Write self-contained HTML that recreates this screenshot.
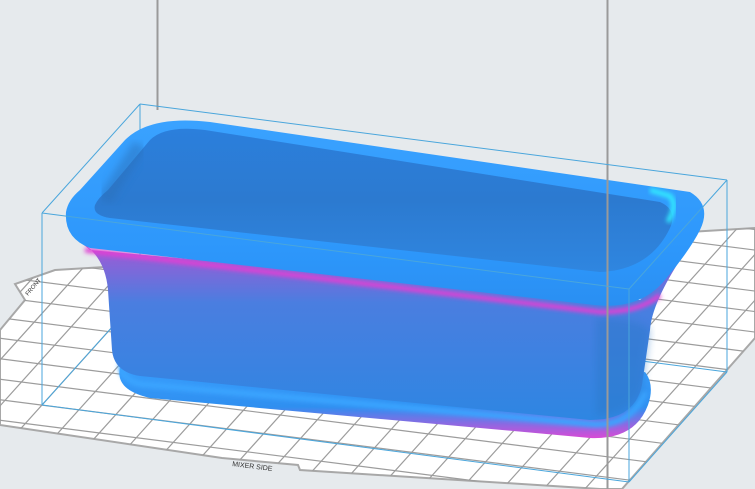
<!DOCTYPE html>
<html><head><meta charset="utf-8"><style>
html,body{margin:0;padding:0;width:755px;height:489px;overflow:hidden;background:#e6eaed;font-family:"Liberation Sans",sans-serif}
svg{display:block}
</style></head><body>
<svg width="755" height="489" viewBox="0 0 755 489" xmlns="http://www.w3.org/2000/svg">
<defs>
<clipPath id="plate"><path d="M55,270 L755,228 L755,338 L622,489 L600,489 L300,470 L298,465 L222,458 L0,425 L0,330 L25,300 L15,284 Z"/></clipPath>
<linearGradient id="rimg" x1="0" y1="0" x2="0" y2="1">
<stop offset="0" stop-color="#3aa2ff"/><stop offset="0.7" stop-color="#2d97fb"/><stop offset="1" stop-color="#2a8ff2"/></linearGradient>
<linearGradient id="bodyg" x1="0" y1="0" x2="0" y2="1">
<stop offset="0" stop-color="#d94ad6"/><stop offset="0.12" stop-color="#8a63d8"/><stop offset="0.35" stop-color="#4a7ee0"/><stop offset="1" stop-color="#2e86e2"/></linearGradient>
<linearGradient id="innerg" x1="0" y1="0" x2="0" y2="1">
<stop offset="0" stop-color="#2b7fdc"/><stop offset="0.5" stop-color="#2c7ad0"/><stop offset="1" stop-color="#2f86e0"/></linearGradient>
<linearGradient id="baseg" x1="0" y1="0" x2="0" y2="1">
<stop offset="0" stop-color="#3aa0ff"/><stop offset="0.6" stop-color="#2f8ff0"/><stop offset="1" stop-color="#d84ad6"/></linearGradient>
<filter id="bl"><feGaussianBlur stdDeviation="2"/></filter>
<filter id="bl4"><feGaussianBlur stdDeviation="4"/></filter>
</defs>

<line x1="157.5" y1="0" x2="157.5" y2="110" stroke="#9a9a9a" stroke-width="2"/>

<path d="M55,270 L755,228 L755,338 L622,489 L600,489 L300,470 L298,465 L222,458 L0,425 L0,330 L25,300 L15,284 Z" fill="#fff" stroke="#a8a8a8" stroke-width="2"/>
<g clip-path="url(#plate)" stroke="#9c9c9c" stroke-width="1.2" id="grid"></g>
<text x="232" y="466" font-size="7" fill="#333" transform="rotate(7 232 466)">MIXER SIDE</text>
<text x="28" y="296" font-size="6" fill="#333" transform="rotate(-50 28 296)">FRONT</text>

<g stroke="#4aa6dc" stroke-width="1" fill="none">
<line x1="140" y1="104" x2="140" y2="296"/>
<line x1="140" y1="296" x2="727" y2="372"/>
<line x1="140" y1="296" x2="42" y2="405"/>
</g>

<!-- base lip -->
<path d="M120,368 Q115,390 150,398 L590,438 Q635,440 648,405 Q655,385 645,372 L600,380 L130,360 Z" fill="url(#baseg)"/>
<path d="M122,362 Q118,378 140,384 L590,424 Q630,428 645,392" fill="none" stroke="#3ba4ff" stroke-width="6" filter="url(#bl)"/>
<!-- body -->
<path d="M78,240 Q105,255 108,290 L112,350 Q114,372 140,376 L590,420 Q635,420 642,385 L650,330 Q652,300 690,245 L640,300 L90,250 Z" fill="url(#bodyg)"/>
<path d="M596,318 Q640,318 650,330 L642,390 Q630,415 596,416 Z" fill="#2a78c8" opacity="0.45" filter="url(#bl4)"/>
<path d="M85,250 L600,312 Q640,312 660,295" fill="none" stroke="#e040d4" stroke-width="5" filter="url(#bl)"/>

<!-- rim -->
<path d="M66,212 Q64,238 90,248 L595,305 Q640,310 665,280 Q690,250 700,230 Q712,205 690,192 L210,122 Q150,115 125,140 L80,190 Q68,200 66,212 Z" fill="url(#rimg)"/>
<!-- inner basin -->
<path d="M95,205 Q92,215 110,218 L600,272 Q650,270 670,228 Q678,210 660,202 L205,130 Q165,125 150,140 L108,190 Q98,198 95,205 Z" fill="url(#innerg)"/>
<path d="M140,145 Q120,175 105,200" stroke="#2a6fb8" stroke-width="14" fill="none" opacity="0.5" filter="url(#bl4)"/>
<path d="M650,190 L670,196 Q678,205 668,222" fill="none" stroke="#30eaff" stroke-width="5" filter="url(#bl)"/>

<line x1="607.5" y1="0" x2="607.5" y2="489" stroke="#9a9a9a" stroke-width="2"/>

<g stroke="#4aa6dc" stroke-width="1" fill="none">
<line x1="140" y1="104" x2="727" y2="180"/>
<line x1="140" y1="104" x2="42" y2="213"/>
<line x1="727" y1="180" x2="629" y2="289"/>
<line x1="42" y1="213" x2="629" y2="289"/>
<line x1="42" y1="213" x2="42" y2="405"/>
<line x1="629" y1="289" x2="629" y2="482"/>
<line x1="727" y1="180" x2="727" y2="372"/>
<line x1="727" y1="372" x2="629" y2="482"/>
<line x1="42" y1="405" x2="629" y2="482"/>
</g>
</svg>
<script>
var g=document.getElementById('grid'),s='';
for(var i=-40;i<40;i++){var x0=42+i*37,y0=405+i*4.7;s+='<line x1="'+(x0-300)+'" y1="'+(y0+333)+'" x2="'+(x0+300)+'" y2="'+(y0-333)+'"/>';}
for(var j=-20;j<20;j++){var x0=42+j*16.5,y0=405-j*18.4;s+='<line x1="'+(x0-800)+'" y1="'+(y0-102)+'" x2="'+(x0+900)+'" y2="'+(y0+115)+'"/>';}
g.innerHTML=s;
</script>
</body></html>
